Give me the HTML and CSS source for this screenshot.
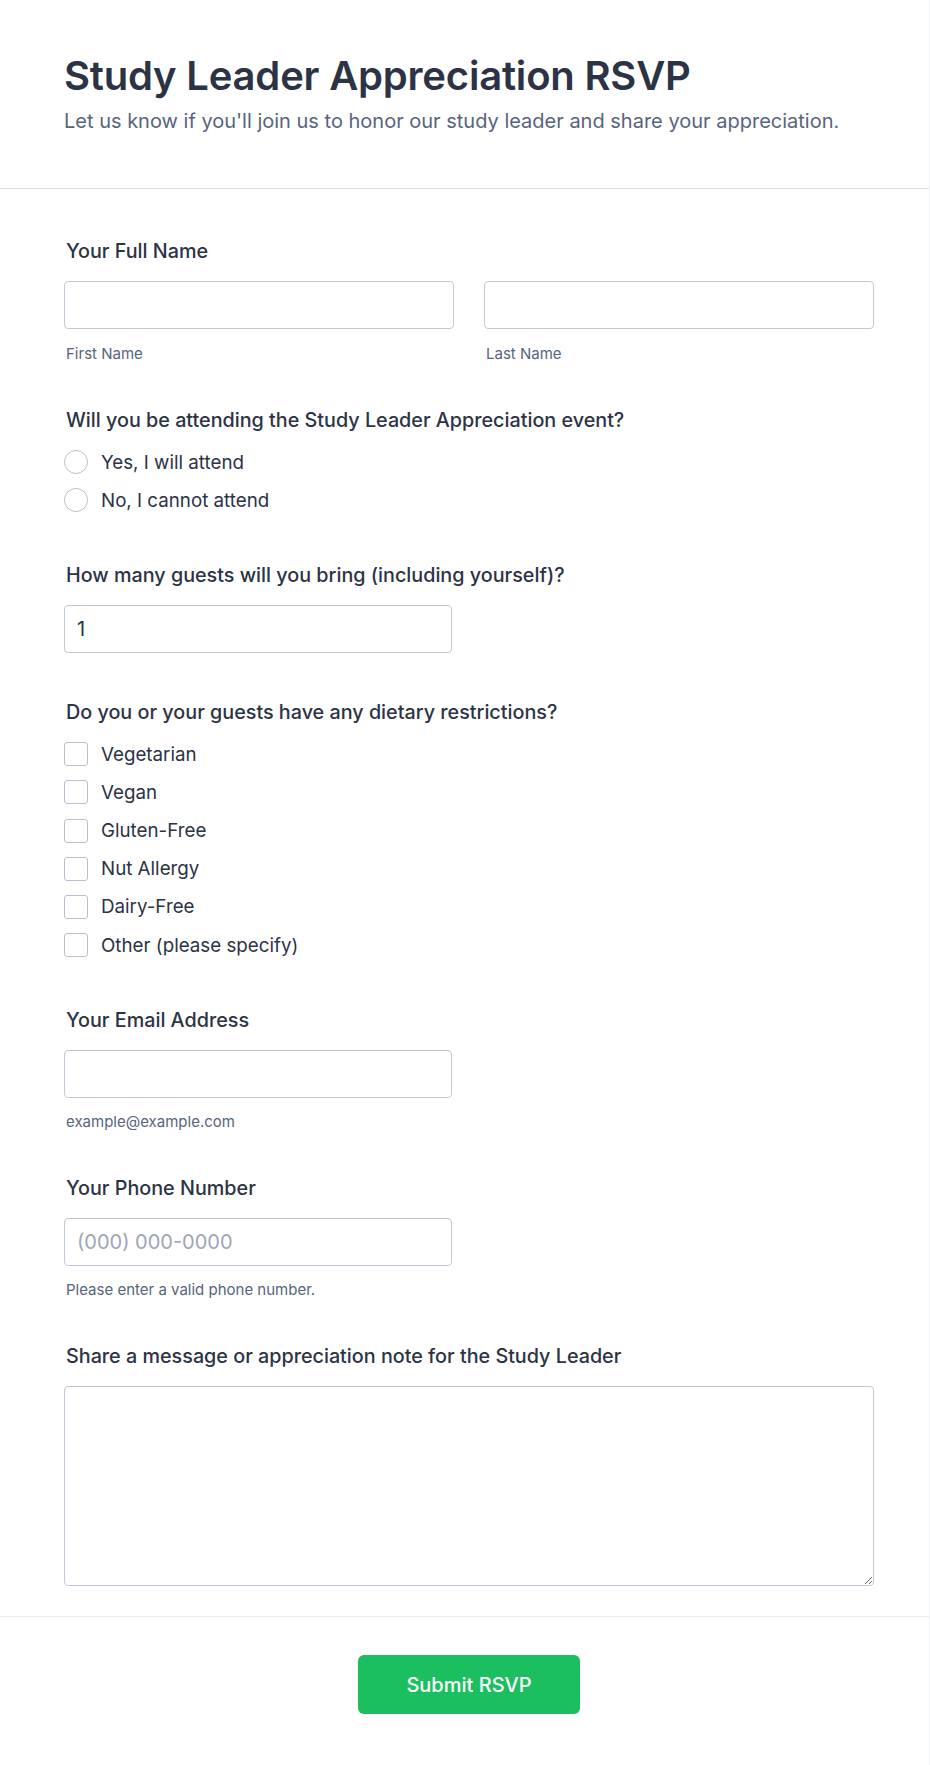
FILE: index.html
```html
<!DOCTYPE html>
<html lang="en">
<head>
<meta charset="utf-8">
<title>Study Leader Appreciation RSVP</title>
<link rel="stylesheet" href="styles.css">
</head>
<body>
<div class="card">
  <header class="header">
    <h1 class="title">Study Leader Appreciation RSVP</h1>
    <p class="subtitle">Let us know if you'll join us to honor our study leader and share your appreciation.</p>
  </header>

  <form class="form-body">
    <div class="field has-sub">
      <label class="label">Your Full Name</label>
      <div class="name-row">
        <div class="name-col">
          <input class="input" type="text">
          <span class="sub">First Name</span>
        </div>
        <div class="name-col">
          <input class="input" type="text">
          <span class="sub">Last Name</span>
        </div>
      </div>
    </div>

    <div class="field">
      <div class="label">Will you be attending the Study Leader Appreciation event?</div>
      <div class="options">
        <label class="option"><span class="radio"></span><span>Yes, I will attend</span></label>
        <label class="option"><span class="radio"></span><span>No, I cannot attend</span></label>
      </div>
    </div>

    <div class="field field-tight">
      <label class="label">How many guests will you bring (including yourself)?</label>
      <input class="input single" type="text" value="1">
    </div>

    <div class="field">
      <div class="label">Do you or your guests have any dietary restrictions?</div>
      <div class="options">
        <label class="option"><span class="check"></span><span>Vegetarian</span></label>
        <label class="option"><span class="check"></span><span>Vegan</span></label>
        <label class="option"><span class="check"></span><span>Gluten-Free</span></label>
        <label class="option"><span class="check"></span><span>Nut Allergy</span></label>
        <label class="option"><span class="check"></span><span>Dairy-Free</span></label>
        <label class="option"><span class="check"></span><span>Other (please specify)</span></label>
      </div>
    </div>

    <div class="field has-sub">
      <label class="label">Your Email Address</label>
      <input class="input single" type="text">
      <span class="sub sub-tight">example@example.com</span>
    </div>

    <div class="field has-sub">
      <label class="label">Your Phone Number</label>
      <input class="input single" type="text" placeholder="(000) 000-0000">
      <span class="sub sub-tight">Please enter a valid phone number.</span>
    </div>

    <div class="field last">
      <label class="label">Share a message or appreciation note for the Study Leader</label>
      <textarea class="textarea"></textarea>
    </div>
  </form>

  <footer class="footer">
    <button class="submit" type="button">Submit RSVP</button>
  </footer>
</div>
</body>
</html>
```

FILE: styles.css
```css
* { box-sizing: border-box; }

html, body {
  margin: 0;
  padding: 0;
  background: #ffffff;
}

body {
  font-family: Inter, "Noto Sans", "Liberation Sans", sans-serif;
  color: #2c3345;
}

.card {
  width: 930px;
  min-height: 1765px;
  border-right: 1px solid #f1f2f6;
  background: #ffffff;
}

.header {
  padding: 52px 55px 53px 64px;
  border-bottom: 1px solid #dcdde6;
}

.title {
  margin: 0;
  font-size: 40px;
  line-height: 48px;
  font-weight: 600;
  letter-spacing: -0.2px;
  color: #2c3345;
}

.subtitle {
  margin: 8px 0 0;
  font-size: 20px;
  line-height: 27px;
  color: #57647e;
}

.form-body {
  padding: 49px 55px 30px 64px;
  display: flex;
  flex-direction: column;
}

.field {
  display: flex;
  flex-direction: column;
  margin-bottom: 48px;
}

.field.field-tight { margin-bottom: 46px; }
.field.has-sub { margin-bottom: 43px; }
.field.last { margin-bottom: 0; }

.label {
  display: block;
  font-size: 19.75px;
  line-height: 27px;
  font-weight: 500;
  color: #2c3345;
  padding-left: 2px;
  margin-bottom: 16px;
}

.name-row {
  display: grid;
  grid-template-columns: 1fr 1fr;
  column-gap: 30px;
}

.name-col {
  display: flex;
  flex-direction: column;
}

.input {
  display: block;
  width: 100%;
  height: 48px;
  border: 1px solid #c3c8d6;
  border-radius: 4px;
  padding: 0 12px;
  font-family: inherit;
  font-size: 20px;
  color: #2c3345;
  background: #ffffff;
  outline: none;
}

.input.single { width: 388px; }

.input::placeholder { color: #9ca6b7; }

.sub {
  display: block;
  margin-top: 14px;
  padding-left: 2px;
  font-size: 15px;
  line-height: 21px;
  color: #57647e;
}

.sub-tight { margin-top: 13px; }

.options {
  display: flex;
  flex-direction: column;
  gap: 10.2px;
  margin-top: -2px;
}

.option {
  display: flex;
  align-items: center;
  gap: 13px;
  height: 28px;
  font-size: 18.75px;
  color: #2c3345;
}

.radio {
  width: 24px;
  height: 24px;
  border: 1px solid #b9bfcc;
  border-radius: 50%;
  background: #ffffff;
  flex: none;
}

.check {
  width: 24px;
  height: 24px;
  border: 1px solid #b9bfcc;
  border-radius: 3px;
  background: #ffffff;
  flex: none;
}

.textarea {
  display: block;
  width: 100%;
  height: 200px;
  border: 1px solid #c3c8d6;
  border-radius: 4px;
  padding: 10px 12px;
  font-family: inherit;
  font-size: 18px;
  background: #ffffff;
  outline: none;
}

.footer {
  border-top: 1px solid #e8eaf0;
  padding: 38px 55px 50px 64px;
  display: flex;
  justify-content: center;
}

.submit {
  width: 222px;
  height: 59px;
  border: none;
  border-radius: 6px;
  background: #1bbf5f;
  color: #ffffff;
  font-family: inherit;
  font-size: 20px;
  font-weight: 500;
  cursor: pointer;
}
```
